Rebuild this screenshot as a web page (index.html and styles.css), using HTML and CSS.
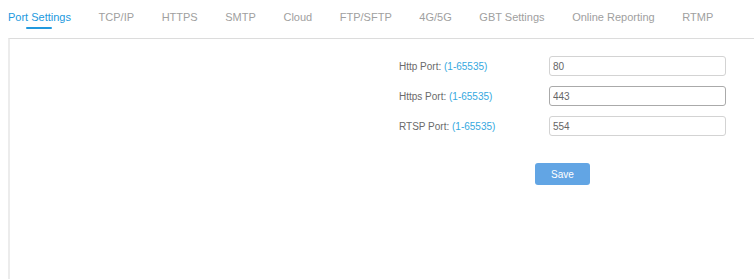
FILE: index.html
```html
<!DOCTYPE html>
<html lang="en">
<head>
<meta charset="UTF-8">
<meta name="viewport" content="width=device-width, initial-scale=1.0">
<title>Port Settings</title>
<link rel="stylesheet" href="styles.css">
</head>
<body>
    <div class="tabs">
        <span class="tab active">Port Settings</span>
        <span class="tab">TCP/IP</span>
        <span class="tab">HTTPS</span>
        <span class="tab">SMTP</span>
        <span class="tab">Cloud</span>
        <span class="tab">FTP/SFTP</span>
        <span class="tab">4G/5G</span>
        <span class="tab">GBT Settings</span>
        <span class="tab">Online Reporting</span>
        <span class="tab">RTMP</span>
    </div>
    <div class="panel">
        <form class="portForm">
            <div class="row">
                <label for="http" class="label">Http Port: <span class="range">(1-65535)</span></label>
                <input type="text" id="http" class="field" value="80">
            </div>
            <div class="row">
                <label for="https" class="label">Https Port: <span class="range">(1-65535)</span></label>
                <input type="text" id="https" class="field hover" value="443">
            </div>
            <div class="row">
                <label for="rtsp" class="label">RTSP Port: <span class="range">(1-65535)</span></label>
                <input type="text" id="rtsp" class="field" value="554">
            </div>
            <div class="actions">
                <input type="button" value="Save" class="button">
            </div>
        </form>
    </div>
</body>
</html>
```

FILE: styles.css
```css
html, body {
    height: 100%;
}
body {
    margin: 0;
    font-family: "Liberation Sans", Arial, sans-serif;
    background-color: white;
    display: flex;
    flex-direction: column;
}
.tabs {
    display: flex;
    gap: 27.6px;
    padding-left: 8px;
    height: 38px;
    box-sizing: border-box;
    padding-top: 10px;
}
.tab {
    position: relative;
    font-size: 11px;
    color: #a0a0a0;
    line-height: 14px;
    height: 14px;
}
.tab.active {
    color: #2199de;
}
.tab.active::after {
    content: "";
    position: absolute;
    left: 50%;
    top: 17px;
    width: 26px;
    height: 2px;
    margin-left: -13px;
    border-radius: 1px;
    background-color: #2199de;
}
.panel {
    flex: 1;
    margin-left: 8px;
    border-top: 1px solid #dcdcdc;
    border-left: 2px solid #ececec;
}
.portForm {
    padding-top: 17px;
    padding-left: 389px;
}
.row {
    display: flex;
    align-items: center;
    height: 20px;
    margin-bottom: 10px;
}
.label {
    width: 150px;
    font-size: 10px;
    color: #6a6a6a;
}
.range {
    color: #35a8e0;
}
.field {
    width: 177px;
    height: 20px;
    box-sizing: border-box;
    border: 1px solid #d3d3d3;
    border-radius: 3px;
    padding: 0 3px;
    font-family: "Liberation Sans", Arial, sans-serif;
    font-size: 10px;
    color: #666;
    outline: none;
}
.field.hover {
    border-color: #aaa;
}
.actions {
    padding-top: 17px;
    padding-left: 136px;
}
.button {
    width: 55px;
    height: 22px;
    border: none;
    border-radius: 3px;
    background-color: #62a5e4;
    color: white;
    font-family: "Liberation Sans", Arial, sans-serif;
    font-size: 10px;
}
```
